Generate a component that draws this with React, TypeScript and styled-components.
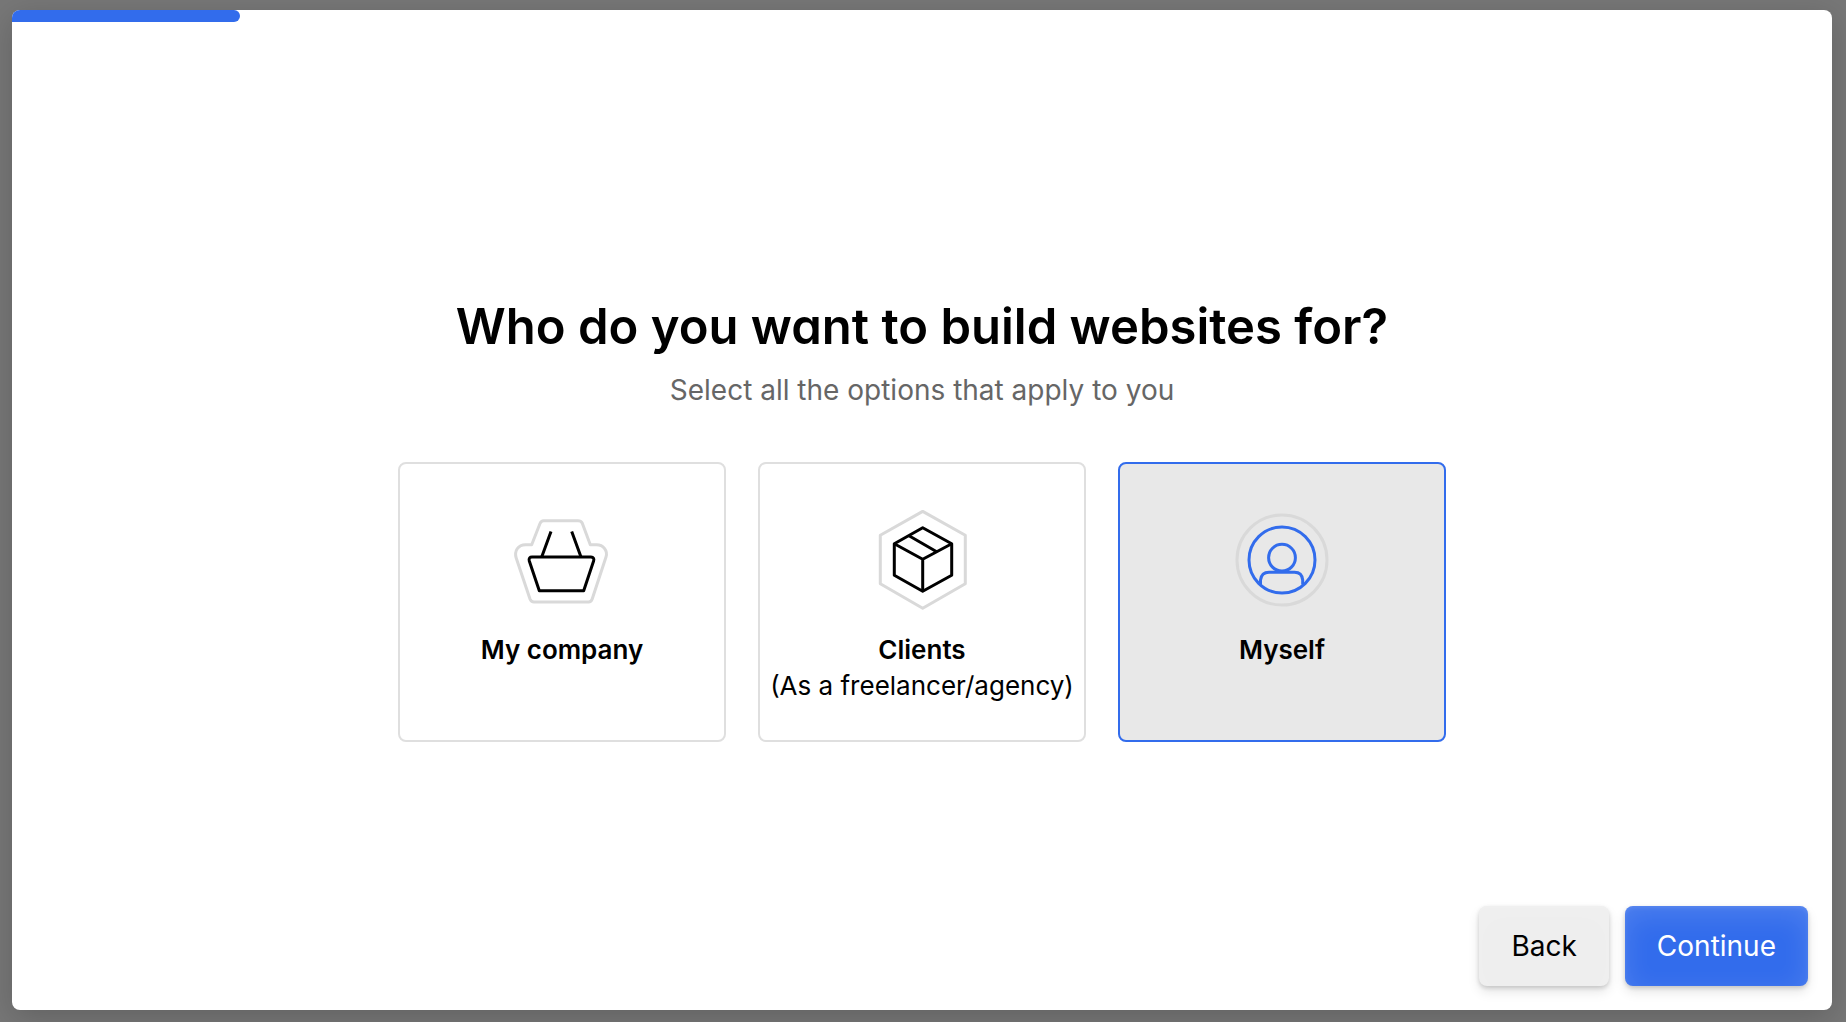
import React, { useState } from "react";
import styled, { createGlobalStyle } from "styled-components";

const GlobalStyle = createGlobalStyle`
  *, *::before, *::after { box-sizing: border-box; }
  body {
    margin: 0;
    background: #777;
    font-family: Inter, "Liberation Sans", sans-serif;
    color: #000;
    -webkit-font-smoothing: antialiased;
  }
`;

const Page = styled.div`
  min-height: 100vh;
  padding: 10px 14px 12px 12px;
  display: flex;
`;

const Panel = styled.form`
  flex: 1;
  display: grid;
  grid-template-rows: minmax(0, 1fr) auto minmax(0, 1fr);
  border-radius: 8px;
  background: #fff;
  box-shadow: 0 8px 32px rgba(0, 0, 0, 0.18);
  overflow: hidden;
`;

const Progress = styled.div`
  height: 12px;
`;

const ProgressBar = styled.div`
  height: 100%;
  border-radius: 0 6px 6px 0;
  background: #326cec;
`;

const Main = styled.main`
  display: flex;
  flex-direction: column;
  align-items: center;
  padding: 20px 24px 0;
  text-align: center;
`;

const Title = styled.h1`
  margin: 0 0 14px;
  font-size: 49px;
  line-height: 58px;
  font-weight: 600;
  font-feature-settings: "cv11";
`;

const Subtitle = styled.p`
  margin: 0 0 52px;
  font-size: 28px;
  line-height: 40px;
  color: #666;
`;

const Options = styled.div`
  display: grid;
  grid-template-columns: repeat(3, minmax(0, 1fr));
  gap: 32px;
  width: 100%;
  max-width: 1048px;
`;

const Card = styled.label<{ $selected: boolean }>`
  position: relative;
  display: flex;
  flex-direction: column;
  align-items: center;
  padding: 46px 0 36px;
  border: 2px solid ${(p) => (p.$selected ? "#326cec" : "#dfdfdf")};
  border-radius: 8px;
  background: ${(p) => (p.$selected ? "#e8e8e8" : "#fff")};
  color: ${(p) => (p.$selected ? "#326cec" : "#000")};
  cursor: pointer;
`;

const CardInput = styled.input`
  position: absolute;
  inset: 0;
  width: 100%;
  height: 100%;
  margin: 0;
  opacity: 0;
  cursor: pointer;
`;

const Icon = styled.svg`
  width: 100px;
  height: 100px;
  margin-bottom: 22px;
  fill: none;
  stroke: currentColor;
  stroke-width: 3;
  stroke-linejoin: round;
`;

const CardLabel = styled.span`
  font-size: 26px;
  line-height: 36px;
  font-weight: 600;
  color: #000;
`;

const CardNote = styled.span`
  font-size: 26px;
  line-height: 36px;
  color: #000;
  white-space: nowrap;
`;

const Footer = styled.footer`
  align-self: end;
  display: flex;
  justify-content: flex-end;
  gap: 16px;
  padding: 24px;
`;

const Button = styled.button<{ $primary?: boolean }>`
  height: 80px;
  padding: 0 32px;
  border: 0;
  border-radius: 8px;
  font: inherit;
  font-size: 28px;
  cursor: pointer;
  color: ${(p) => (p.$primary ? "#fff" : "#000")};
  background: ${(p) => (p.$primary ? "#326cec" : "#eee")};
  box-shadow:
    inset 0 8px 28px rgba(255, 255, 255, 0.14),
    inset 0 2px 4px rgba(255, 255, 255, 0.1),
    0 2px 4px rgba(0, 0, 0, 0.16),
    0 6px 12px rgba(0, 0, 0, 0.1);
`;

const HALO = "#d9d9d9";

const BasketIcon = () => (
  <Icon viewBox="0 0 100 100" aria-hidden="true">
    <path
      stroke={HALO}
      d="M19.7 34.7 28 13.5Q29.2 10.7 31.5 10.7H66Q69 10.7 70.2 13L78.3 34.7H84.5C91.5 34.7 96 41 94 47L80.2 89Q79.2 92 76.5 92H22Q19.2 92 18 89L4.2 48C2 41 6 34.7 13.5 34.7Z"
    />
    <path d="M39 21.5 29.7 47M59.7 21.5 69 47" />
    <path d="M27.3 80.7 17.3 51C16.5 48 18 47 20 47H79C81.5 47 82.3 49 81.6 51L71.7 80.7Z" />
  </Icon>
);

const BoxIcon = () => (
  <Icon viewBox="0 0 100 100" aria-hidden="true">
    <path stroke={HALO} d="M50.7 1.4 93.3 25.3V73.7L50.7 98.2 8.3 73.7V25.3Z" />
    <path d="M50.7 17.7 79.7 33.7V65.3L50.7 81.3 22.3 65.3V33.7Z" />
    <path d="M22.3 33.7 50.7 49.3 79.7 33.7M50.7 49.3V81.3M37 25.7 64.7 41.7" />
  </Icon>
);

const PersonIcon = () => (
  <Icon viewBox="0 0 100 100" aria-hidden="true">
    <circle stroke={HALO} cx="50" cy="50" r="45" />
    <circle cx="50" cy="50" r="33" />
    <circle cx="50" cy="47.7" r="13.4" />
    <path d="M28.5 74.5V70Q29.5 62.2 37 62.2H62.5Q70 62.2 70.7 70V74.5" />
  </Icon>
);

const OPTIONS = [
  { id: "company", label: "My company", note: "", Art: BasketIcon },
  { id: "clients", label: "Clients", note: "(As a freelancer/agency)", Art: BoxIcon },
  { id: "myself", label: "Myself", note: "", Art: PersonIcon },
];

const STEP = 1;
const STEPS = 8;

export default function App() {
  const [selected, setSelected] = useState<string[]>(["myself"]);
  const toggle = (id: string) =>
    setSelected((s) => (s.includes(id) ? s.filter((x) => x !== id) : [...s, id]));

  return (
    <Page>
      <GlobalStyle />
      <Panel onSubmit={(e) => e.preventDefault()}>
        <Progress role="progressbar" aria-label="Setup progress" aria-valuenow={STEP} aria-valuemax={STEPS}>
          <ProgressBar style={{ width: `${(STEP / STEPS) * 100}%` }} />
        </Progress>
        <Main>
          <Title>Who do you want to build websites for?</Title>
          <Subtitle>Select all the options that apply to you</Subtitle>
          <Options>
            {OPTIONS.map(({ id, label, note, Art }) => (
              <Card key={id} htmlFor={id} $selected={selected.includes(id)}>
                <CardInput
                  id={id}
                  type="checkbox"
                  checked={selected.includes(id)}
                  onChange={() => toggle(id)}
                />
                <Art />
                <CardLabel>{label}</CardLabel>
                {note && <CardNote>{note}</CardNote>}
              </Card>
            ))}
          </Options>
        </Main>
        <Footer>
          <Button type="button">Back</Button>
          <Button type="submit" $primary>
            Continue
          </Button>
        </Footer>
      </Panel>
    </Page>
  );
}
